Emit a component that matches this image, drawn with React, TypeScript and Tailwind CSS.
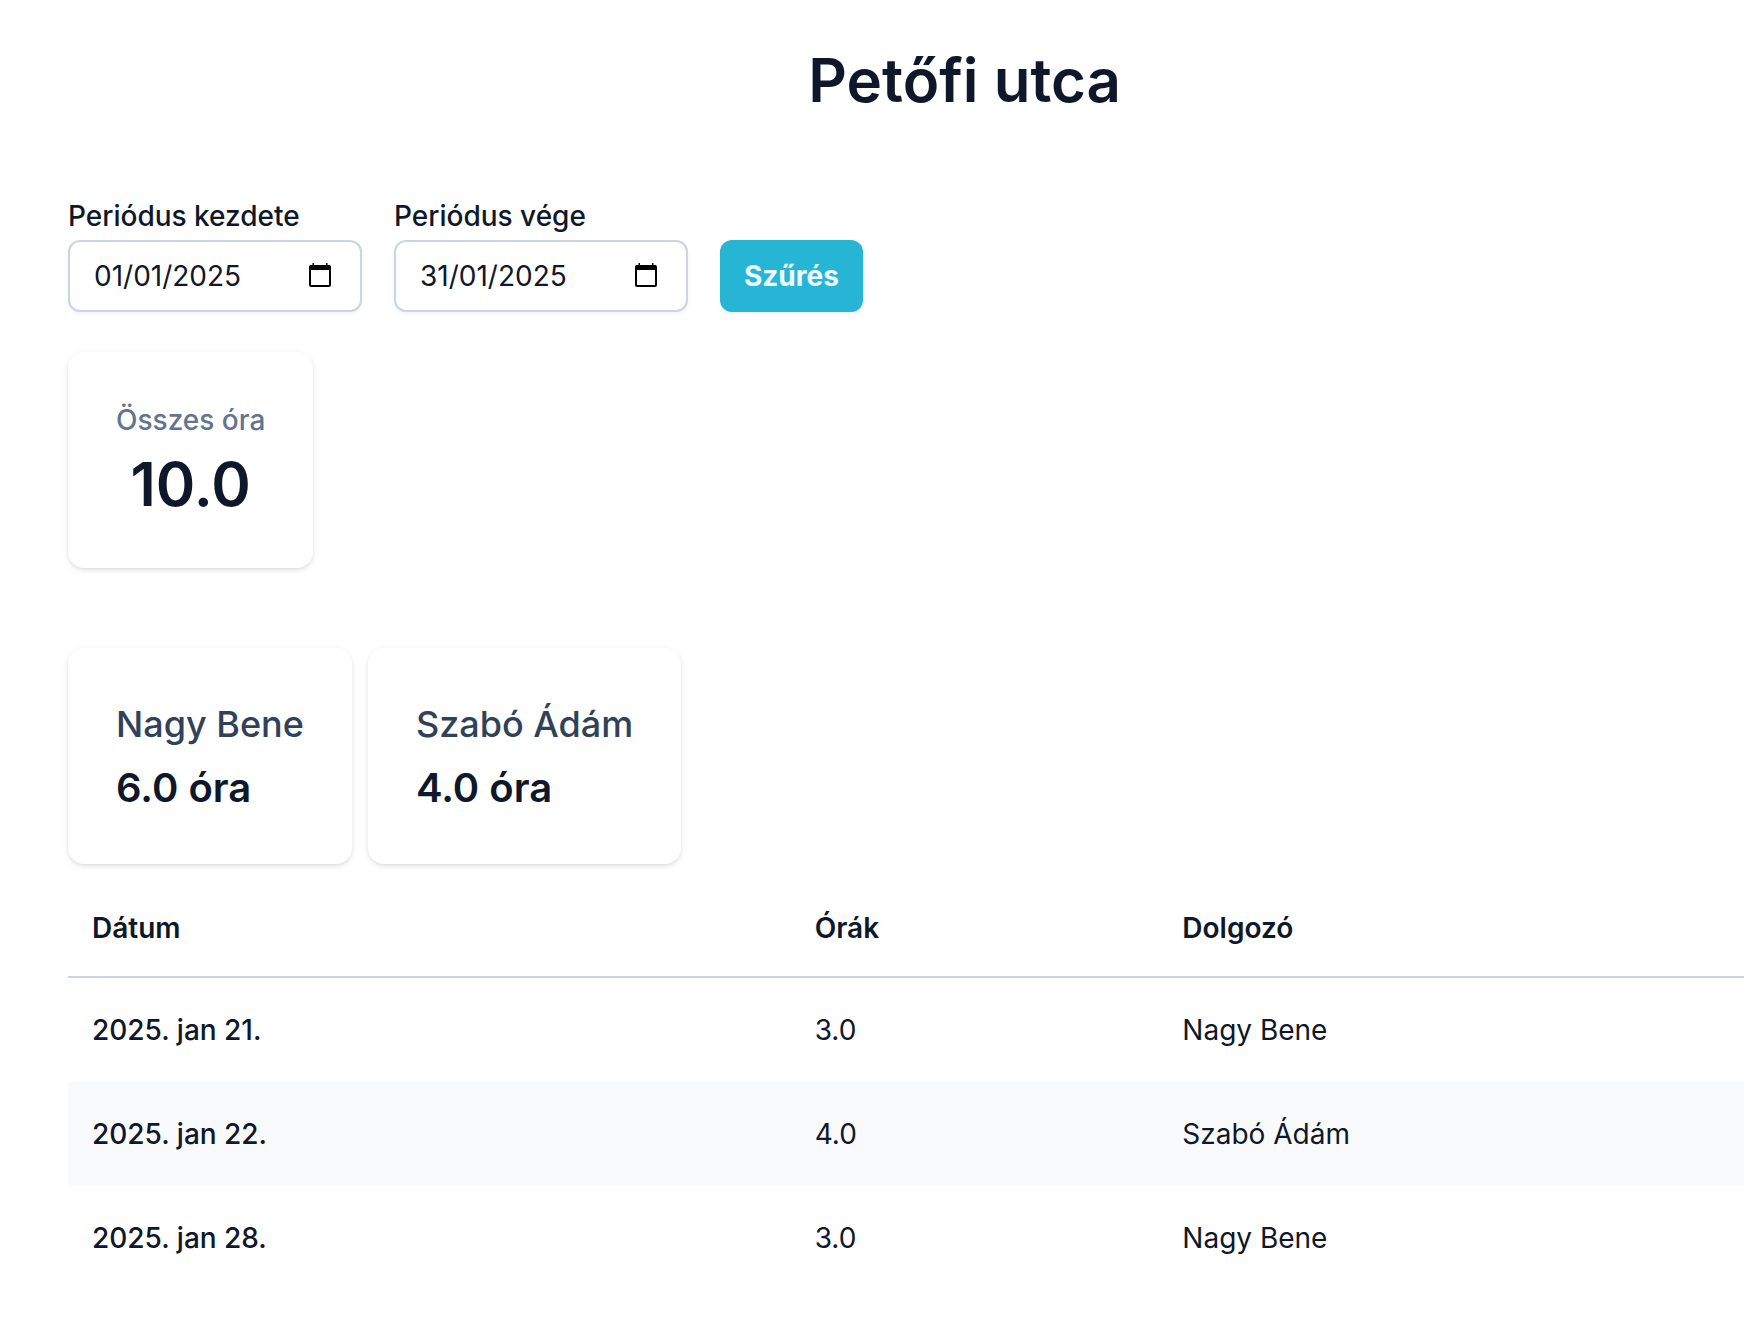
import { useState } from 'react'

interface Entry {
  date: string
  hours: string
  worker: string
}

const entries: Entry[] = [
  { date: '2025. jan 21.', hours: '3.0', worker: 'Nagy Bene' },
  { date: '2025. jan 22.', hours: '4.0', worker: 'Szabó Ádám' },
  { date: '2025. jan 28.', hours: '3.0', worker: 'Nagy Bene' },
]

const workers = [
  { name: 'Nagy Bene', hours: '6.0 óra' },
  { name: 'Szabó Ádám', hours: '4.0 óra' },
]

const cardClass = 'rounded-2xl bg-white p-12 shadow-[0_2px_6px_rgba(0,0,0,0.1),0_2px_4px_-2px_rgba(0,0,0,0.1)]'
const thClass = 'border-b-2 border-slate-300 px-6 py-7 font-semibold'

function CalendarIcon() {
  return (
    <svg width="22" height="26" viewBox="0 0 22 26" fill="none" aria-hidden="true">
      <rect x="1" y="3" width="20" height="20" rx="1" stroke="#000" strokeWidth="2" />
      <path d="M1 2h20v5H1zM3.5 0h1.5v3H3.5zM17 0h1.5v3H17z" fill="#000" />
    </svg>
  )
}

interface DateFieldProps {
  id: string
  label: string
  value: string
  onChange: (value: string) => void
}

function DateField({ id, label, value, onChange }: DateFieldProps) {
  return (
    <div className="flex flex-col gap-1">
      <label htmlFor={id} className="font-medium">{label}</label>
      <div className="flex h-[72px] w-[294px] items-center justify-between rounded-xl border-2 border-slate-300 bg-white pr-[29px] pl-6 shadow-[0_2px_4px_rgba(0,0,0,0.05)]">
        <input
          id={id}
          value={value}
          onChange={e => onChange(e.target.value)}
          className="w-[180px] bg-transparent focus:outline-none"
        />
        <button type="button" aria-label={`${label} naptár`}>
          <CalendarIcon />
        </button>
      </div>
    </div>
  )
}

export default function App() {
  const [start, setStart] = useState('01/01/2025')
  const [end, setEnd] = useState('31/01/2025')

  return (
    <div className="min-h-screen overflow-x-hidden bg-white pl-[68px] font-['Inter',sans-serif] text-[28px] leading-10 text-slate-900">
      <main className="w-[107%] pt-11 pb-12">
        <h1 className="text-center text-[60px] leading-[72px] font-semibold">Petőfi utca</h1>

        <form className="mt-20 flex items-end gap-8" onSubmit={e => e.preventDefault()}>
          <DateField id="start" label="Periódus kezdete" value={start} onChange={setStart} />
          <DateField id="end" label="Periódus vége" value={end} onChange={setEnd} />
          <button type="submit" className="h-[72px] rounded-xl bg-[#26b5d4] px-6 font-bold text-cyan-50 shadow-[0_2px_4px_rgba(0,0,0,0.05)]">
            Szűrés
          </button>
        </form>

        <div className="mt-10 flex">
          <div className={`${cardClass} text-center`}>
            <p className="font-medium text-slate-500">Összes óra</p>
            <p className="mt-2 text-[60px] leading-[72px] font-semibold">10.0</p>
          </div>
        </div>

        <div className="mt-20 flex gap-4">
          {workers.map(w => (
            <div key={w.name} className={cardClass}>
              <p className="text-4xl leading-14 font-medium text-slate-700">{w.name}</p>
              <p className="mt-2 text-[40px] leading-14 font-semibold">{w.hours}</p>
            </div>
          ))}
        </div>

        <table className="mt-4 w-full table-fixed border-separate border-spacing-0 text-left">
          <thead>
            <tr>
              <th className={`${thClass} w-[40.3%]`}>Dátum</th>
              <th className={`${thClass} w-[20.5%]`}>Órák</th>
              <th className={thClass}>Dolgozó</th>
            </tr>
          </thead>
          <tbody>
            {entries.map(entry => (
              <tr key={entry.date} className="even:bg-slate-50">
                <td className="px-6 py-8 font-medium">{entry.date}</td>
                <td className="px-6 py-8">{entry.hours}</td>
                <td className="px-6 py-8">{entry.worker}</td>
              </tr>
            ))}
          </tbody>
        </table>
      </main>
    </div>
  )
}
